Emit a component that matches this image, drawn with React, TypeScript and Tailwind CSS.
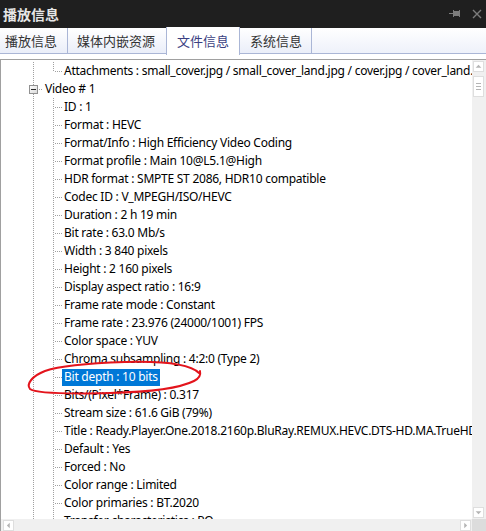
import React from 'react';

const LINE = '#a0a0a0';

// Tree connector for the first indent column (line at x=33)
const ColA = ({ box = false }: { box?: boolean }) => (
  <svg width="20" height="18" className="shrink-0" shapeRendering="crispEdges">
    {box ? (
      <>
        <line x1="10.5" y1="0" x2="10.5" y2="5" stroke={LINE} strokeDasharray="1 1" />
        <line x1="10.5" y1="14" x2="10.5" y2="18" stroke={LINE} strokeDasharray="1 1" />
        <defs>
          <linearGradient id="bx" x1="0" y1="0" x2="1" y2="1">
            <stop offset="0" stopColor="#ffffff" />
            <stop offset="1" stopColor="#d8d8d8" />
          </linearGradient>
        </defs>
        <rect x="6.5" y="5.5" width="8" height="8" fill="url(#bx)" stroke="#919191" />
        <line x1="8" y1="9.5" x2="13" y2="9.5" stroke="#2a2a2a" />
        <line x1="16" y1="9.5" x2="21" y2="9.5" stroke={LINE} strokeDasharray="1 1" />
      </>
    ) : (
      <line x1="10.5" y1="0" x2="10.5" y2="18" stroke={LINE} strokeDasharray="1 1" />
    )}
  </svg>
);

// Tree connector for the second indent column (line at x=53)
const ColB = ({ last = false }: { last?: boolean }) => (
  <svg width="20" height="18" className="shrink-0" shapeRendering="crispEdges">
    <line x1="10.5" y1="0" x2="10.5" y2={last ? 10 : 18} stroke={LINE} strokeDasharray="1 1" />
    <line x1="12" y1="9.5" x2="20" y2="9.5" stroke={LINE} strokeDasharray="1 1" />
  </svg>
);

const fields = [
  'ID : 1',
  'Format : HEVC',
  'Format/Info : High Efficiency Video Coding',
  'Format profile : Main 10@L5.1@High',
  'HDR format : SMPTE ST 2086, HDR10 compatible',
  'Codec ID : V_MPEGH/ISO/HEVC',
  'Duration : 2 h 19 min',
  'Bit rate : 63.0 Mb/s',
  'Width : 3 840 pixels',
  'Height : 2 160 pixels',
  'Display aspect ratio : 16:9',
  'Frame rate mode : Constant',
  'Frame rate : 23.976 (24000/1001) FPS',
  'Color space : YUV',
  'Chroma subsampling : 4:2:0 (Type 2)',
  'Bit depth : 10 bits',
  'Bits/(Pixel*Frame) : 0.317',
  'Stream size : 61.6 GiB (79%)',
  'Title : Ready.Player.One.2018.2160p.BluRay.REMUX.HEVC.DTS-HD.MA.TrueHD.7.1.Atmos-FGT',
  'Default : Yes',
  'Forced : No',
  'Color range : Limited',
  'Color primaries : BT.2020',
  'Transfer characteristics : PQ',
  'Matrix coefficients : BT.2020 non-constant',
];

const tabs = [
  { t: '播放信息', cls: 'w-[68px] pl-[5px]' },
  { t: '媒体内嵌资源', cls: 'w-[99px] pl-[9px]' },
  { t: '文件信息', cls: 'w-[74px] pl-[10px]' },
  { t: '系统信息', cls: 'w-[72px] pl-[10px]' },
];

const ScrollBtn = ({ dir }: { dir: 'up' | 'down' | 'left' | 'right' }) => {
  const pts = {
    up: '2,7 5.5,3.5 9,7',
    down: '2,4 5.5,7.5 9,4',
    left: '7,2 3.5,5.5 7,9',
    right: '4,2 7.5,5.5 4,9',
  }[dir];
  return (
    <div className="w-[11px] h-[11px] bg-white border border-[#dedede] flex items-center justify-center shrink-0">
      <svg width="11" height="11" viewBox="0 0 11 11">
        <polygon points={pts} fill="#b4b4b4" />
      </svg>
    </div>
  );
};

export default function App() {
  return (
    <div
      className="relative w-[486px] h-[531px] overflow-hidden bg-white flex flex-col select-none"
      style={{ fontFamily: '"Noto Sans", "Noto Sans CJK SC", sans-serif' }}
    >
      {/* title bar */}
      <div className="h-[28px] bg-[#1f1f1f] flex items-center justify-between pl-[3px] pr-[4px] shrink-0">
        <span
          className="text-[14px] font-bold text-[#e6e6e6] leading-none"
          style={{ fontFamily: '"Noto Sans CJK SC", sans-serif' }}
        >
          播放信息
        </span>
        <div className="flex items-center gap-[11px] mt-[-1px]">
          <svg width="12" height="9" viewBox="0 0 12 9" shapeRendering="crispEdges">
            <rect x="0" y="4" width="4" height="1" fill="#7c7c7c" />
            <rect x="4" y="1" width="1" height="7" fill="#7c7c7c" />
            <rect x="5" y="2" width="5" height="5" fill="#7c7c7c" />
            <rect x="10" y="1" width="1" height="7" fill="#7c7c7c" />
          </svg>
          <svg width="10" height="10" viewBox="0 0 10 10">
            <path d="M1 1 L9 9 M9 1 L1 9" stroke="#7c7c7c" strokeWidth="1.4" />
          </svg>
        </div>
      </div>

      {/* tabs */}
      <div className="h-[26px] flex items-end bg-gradient-to-b from-white to-[#eef1fa] border-b border-[#aab6d6] shrink-0">
        {tabs.map(({ t, cls }, i) => {
          const active = i === 2;
          return (
            <div
              key={t}
              className={
                active
                  ? `${cls} h-[28px] -mb-[2px] -ml-px bg-white border-x border-[#aab6d6] flex items-center text-[13px] text-[#3b3f82] relative`
                  : `${cls} h-full flex items-center text-[13px] text-[#333333] border-r border-[#aab6d6] bg-gradient-to-b from-white to-[#eaeef9]`
              }
              style={{ fontFamily: '"Noto Sans CJK SC", sans-serif' }}
            >
              {t}
            </div>
          );
        })}
      </div>

      <div className="h-[5px] shrink-0" />

      {/* tree panel */}
      <div className="flex-1 flex flex-col border-t border-l border-[#a0a0a0] min-h-0">
        <div className="flex-1 flex min-h-0">
          <div className="flex-1 overflow-hidden pt-[2px] text-[12px] tracking-[-0.25px] text-black leading-none">
            <div className="h-[18px] flex items-center whitespace-nowrap">
              <div className="w-[22px] shrink-0" />
              <ColA />
              <ColB last />
              <span className="ml-[1px]">Attachments : small_cover.jpg / small_cover_land.jpg / cover.jpg / cover_land.jpg</span>
            </div>
            <div className="h-[18px] flex items-center whitespace-nowrap">
              <div className="w-[22px] shrink-0" />
              <ColA box />
              <span className="ml-[2px]">Video # 1</span>
            </div>
            {fields.map((f) => {
              const hl = f.startsWith('Bit depth');
              return (
                <div key={f} className="h-[18px] flex items-center whitespace-nowrap">
                  <div className="w-[22px] shrink-0" />
                  <ColA />
                  <ColB />
                  {hl ? (
                    <span className="ml-[-1px] h-[17px] px-[2px] flex items-center bg-[#0078d7] text-white">{f}</span>
                  ) : (
                    <span className="ml-[1px]">{f}</span>
                  )}
                </div>
              );
            })}
          </div>
          {/* vertical scrollbar */}
          <div className="w-[14px] bg-[#f0f0f0] flex flex-col pl-[1px] pt-[1px] pb-[1px] shrink-0">
            <ScrollBtn dir="up" />
            <div className="mt-[4px] w-[11px] h-[21px] bg-white border border-[#dedede] flex flex-col items-center justify-center gap-[2px]">
              <div className="w-[5px] h-px bg-[#b4b4b4]" />
              <div className="w-[5px] h-px bg-[#b4b4b4]" />
              <div className="w-[5px] h-px bg-[#b4b4b4]" />
            </div>
            <div className="flex-1" />
            <ScrollBtn dir="down" />
          </div>
        </div>
        {/* horizontal scrollbar */}
        <div className="h-[12px] flex shrink-0">
          <div className="flex-1 bg-[#f0f0f0] flex items-start pt-[1px] pl-[2px] pr-[1px]">
            <ScrollBtn dir="left" />
            <div className="flex-1" />
            <ScrollBtn dir="right" />
          </div>
          <div className="w-[14px] bg-[#dcdcdc]" />
        </div>
      </div>

      {/* red hand-drawn annotation */}
      <svg className="absolute left-0 top-0 pointer-events-none" width="486" height="531">
        <path
          d="M199,373 C190,364 160,361 125,362 C95,363 62,365 45,371 C32,376 26,384 30,389 C36,394 70,394 110,393 C150,392 180,388 194,381 C200,378 201,375 200,371"
          fill="none"
          stroke="#e3141c"
          strokeWidth="2"
          strokeLinecap="round"
        />
      </svg>
    </div>
  );
}
